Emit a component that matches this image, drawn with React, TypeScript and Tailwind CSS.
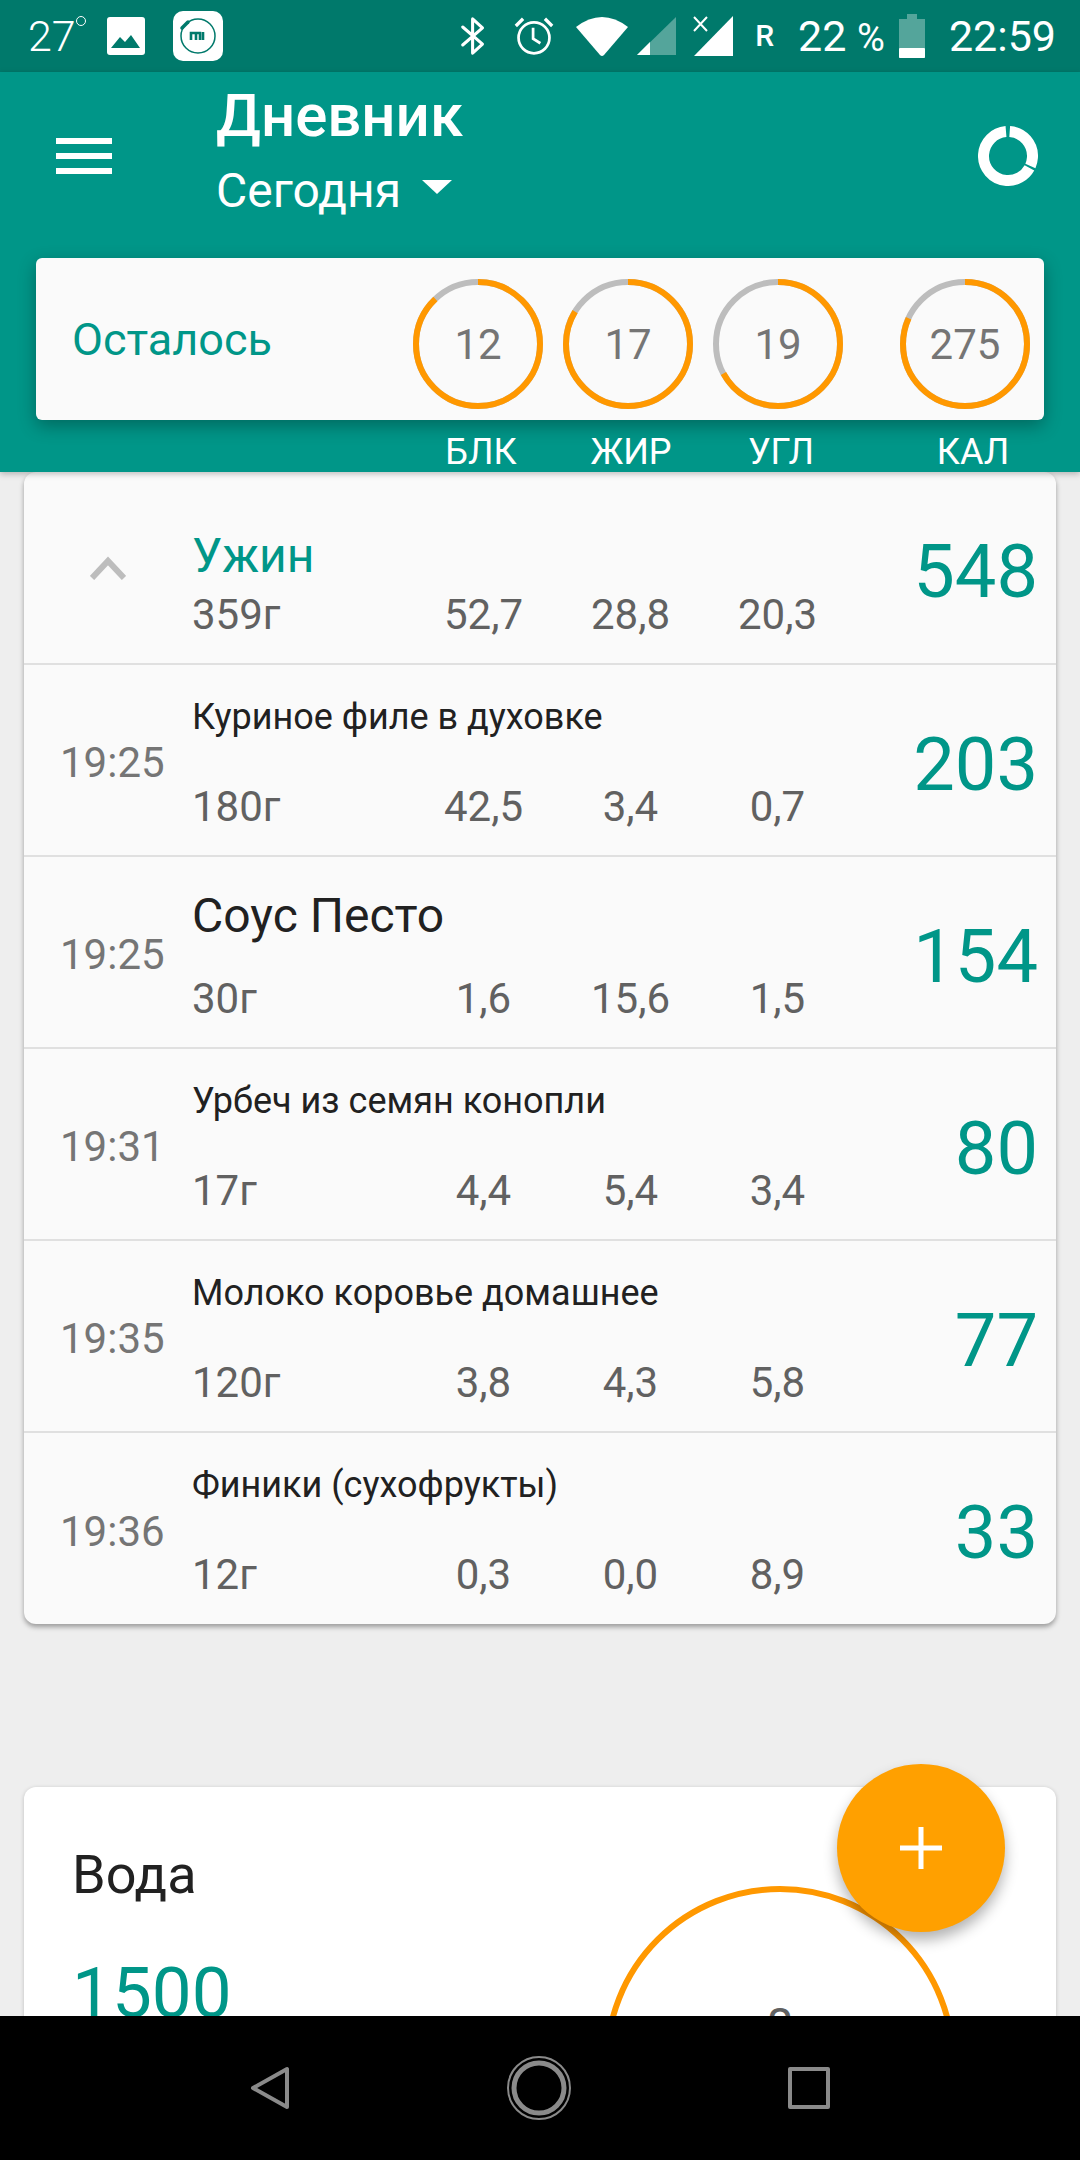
import React from 'react';

const TEAL = '#009688';
const ORANGE = '#FF9800';

type Entry = {
  time: string;
  name: string;
  large?: boolean;
  grams: string;
  protein: string;
  fat: string;
  carbs: string;
  kcal: string;
};

const entries: Entry[] = [
  { time: '19:25', name: 'Куриное филе в духовке', grams: '180г', protein: '42,5', fat: '3,4', carbs: '0,7', kcal: '203' },
  { time: '19:25', name: 'Соус Песто', large: true, grams: '30г', protein: '1,6', fat: '15,6', carbs: '1,5', kcal: '154' },
  { time: '19:31', name: 'Урбеч из семян конопли', grams: '17г', protein: '4,4', fat: '5,4', carbs: '3,4', kcal: '80' },
  { time: '19:35', name: 'Молоко коровье домашнее', grams: '120г', protein: '3,8', fat: '4,3', carbs: '5,8', kcal: '77' },
  { time: '19:36', name: 'Финики (сухофрукты)', grams: '12г', protein: '0,3', fat: '0,0', carbs: '8,9', kcal: '33' },
];

const macros = [
  { label: '12', done: 0.878 },
  { label: '17', done: 0.836 },
  { label: '19', done: 0.67 },
  { label: '275', done: 0.817 },
];

// Ring with an orange arc running clockwise from 12 o'clock over a grey track
function Ring({ value, done }: { value: string; done: number }) {
  const r = 62;
  const c = 2 * Math.PI * r;
  return (
    <div className="relative w-[130px] h-[130px] flex items-center justify-center">
      <svg className="absolute inset-0" width="130" height="130" viewBox="0 0 130 130">
        <circle cx="65" cy="65" r={r} fill="none" stroke="#BDBDBD" strokeWidth="6" />
        <circle
          cx="65"
          cy="65"
          r={r}
          fill="none"
          stroke={ORANGE}
          strokeWidth="6"
          strokeDasharray={`${c * done} ${c}`}
          transform="rotate(-90 65 65)"
        />
      </svg>
      <span className="text-[42px] leading-none text-[#757575] mt-[2px]">{value}</span>
    </div>
  );
}

function StatusBar() {
  return (
    <div className="h-[72px] shrink-0 bg-[#00796B] flex items-center text-white pl-[28px] pr-[24px]">
      <span className="text-[43px] leading-none font-light">27</span>
      <span className="w-[10px] h-[10px] rounded-full border border-white -mt-[30px]" />
      <svg className="ml-[20px]" width="40" height="40" viewBox="0 0 40 40">
        <rect x="1" y="1" width="38" height="38" rx="3" fill="#fff" />
        <path d="M5 32 L14 21 L19 26 L25 19 L34 32 Z" fill="#00796B" />
      </svg>
      <svg className="ml-[27px]" width="50" height="50" viewBox="0 0 50 50">
        <rect x="0" y="0" width="50" height="50" rx="10" fill="#fff" />
        <circle cx="25" cy="25" r="17" fill="none" stroke="#00796B" strokeWidth="1.5" />
        <path d="M9 17 L15 11" stroke="#00796B" strokeWidth="3.5" strokeLinecap="round" />
        <path d="M18 29 V22 H23 V29 M23 22 H27 V29 M30 21 V29" fill="none" stroke="#00796B" strokeWidth="2.6" />
      </svg>
      <div className="ml-auto flex items-center">
        <svg width="27" height="42" viewBox="0 0 30 44" fill="none" stroke="#fff" strokeWidth="3.4" strokeLinecap="round" strokeLinejoin="round">
          <path d="M3 12 L25 31 L14 41 V3 L25 13 L3 32" />
        </svg>
        <svg className="ml-[27px]" width="40" height="44" viewBox="0 0 44 46" fill="none" stroke="#fff" strokeWidth="3">
          <circle cx="22" cy="25" r="17" />
          <path d="M21 14 V26 L29 31" />
          <path d="M2 12 L10 4 M42 12 L34 4" strokeWidth="3.6" />
        </svg>
        <svg className="ml-[22px]" width="52" height="42" viewBox="0 0 52 42">
          <path d="M0 12 Q26 -8 52 12 L28 40 Q26 42 24 40 Z" fill="#fff" />
        </svg>
        <svg className="ml-[8px]" width="40" height="42" viewBox="0 0 40 42">
          <path d="M40 2 V40 H1 Z" fill="#fff" fillOpacity="0.33" />
          <path d="M14 27 V40 H1 Z" fill="#fff" />
        </svg>
        <svg className="ml-[17px]" width="40" height="44" viewBox="0 0 40 44">
          <path d="M40 2 V42 H1 Z" fill="#fff" />
          <path d="M1 3 L14 17 M14 3 L1 17" stroke="#fff" strokeWidth="2" />
        </svg>
        <span className="ml-[22px] text-[30px] font-medium leading-none">R</span>
        <span className="ml-[24px] text-[43px] leading-none">22 <span className="text-[38px]">%</span></span>
        <svg className="ml-[14px]" width="26" height="44" viewBox="0 0 26 44">
          <path d="M8 0 H18 V5 H26 V44 H0 V5 H8 Z" fill="#fff" fillOpacity="0.33" />
          <rect x="0" y="34" width="26" height="10" rx="1" fill="#fff" />
        </svg>
        <span className="ml-[24px] text-[43px] leading-none">22:59</span>
      </div>
    </div>
  );
}

function Header() {
  return (
    <div className="h-[400px] shrink-0 flex flex-col relative z-10 shadow-[0_2px_6px_rgba(0,0,0,0.25)]" style={{ backgroundColor: TEAL }}>
      <div className="h-[186px] shrink-0 flex items-start text-white">
        <div className="w-[56px] ml-[56px] mt-[66px] flex flex-col gap-[9px]">
          <div className="h-[6px] bg-white" />
          <div className="h-[6px] bg-white" />
          <div className="h-[6px] bg-white" />
        </div>
        <div className="ml-[104px] mt-[11px] flex flex-col">
          <span className="text-[60px] leading-[66px] font-medium">Дневник</span>
          <div className="mt-[16px] flex items-center">
            <span className="text-[48px] leading-[52px]">Сегодня</span>
            <span className="ml-[21px] -mt-[8px] w-0 h-0 border-l-[15px] border-r-[15px] border-t-[14px] border-l-transparent border-r-transparent border-t-white" />
          </div>
        </div>
        <svg className="ml-auto mr-[42px] mt-[54px]" width="60" height="60" viewBox="0 0 60 60" fill="none" stroke="#fff" strokeWidth="11">
          <circle cx="30" cy="30" r="24.5" pathLength="360" strokeDasharray="110 5 236 9" transform="rotate(-86 30 30)" />
        </svg>
      </div>
      <div className="mx-[36px] h-[162px] shrink-0 rounded-[6px] bg-[#FAFAFA] shadow-[0_6px_18px_rgba(0,0,0,0.3)] flex items-center pl-[36px]">
        <span className="text-[45px] text-[#009688] w-[341px] mt-[2px]">Осталось</span>
        <div className="flex pt-[10px]">
          <div className="w-[150px]"><Ring value={macros[0].label} done={macros[0].done} /></div>
          <div className="w-[150px]"><Ring value={macros[1].label} done={macros[1].done} /></div>
          <div className="w-[187px]"><Ring value={macros[2].label} done={macros[2].done} /></div>
          <div className="w-[130px]"><Ring value={macros[3].label} done={macros[3].done} /></div>
        </div>
      </div>
      <div className="flex pl-[406px] pt-[12px] text-white text-[36px] leading-[40px]">
        <span className="w-[150px] text-center">БЛК</span>
        <span className="w-[150px] text-center">ЖИР</span>
        <span className="w-[150px] text-center">УГЛ</span>
        <span className="w-[190px] ml-[22px] text-center">КАЛ</span>
      </div>
    </div>
  );
}

function MacroCells({ entry }: { entry: { protein: string; fat: string; carbs: string } }) {
  return (
    <div className="flex text-[42px] leading-[44px] text-[#616161] ml-[-1px]">
      <span className="w-[147px] text-center">{entry.protein}</span>
      <span className="w-[147px] text-center">{entry.fat}</span>
      <span className="w-[147px] text-center">{entry.carbs}</span>
    </div>
  );
}

function DinnerHead() {
  return (
    <div className="h-[193px] flex relative border-b-2 border-[#E0E0E0]">
      <div className="w-[168px] shrink-0 flex justify-center pt-[84px]">
        <svg width="36" height="24" viewBox="0 0 36 24" fill="none" stroke="#BDBDBD" strokeWidth="6">
          <path d="M2 22 L18 5 L34 22" />
        </svg>
      </div>
      <div className="flex-1 flex flex-col">
        <span className="mt-[57px] text-[48px] leading-[54px] text-[#009688]">Ужин</span>
        <div className="flex items-center mt-[10px]">
          <span className="w-[219px] text-[42px] leading-[44px] text-[#616161]">359г</span>
          <MacroCells entry={{ protein: '52,7', fat: '28,8', carbs: '20,3' }} />
        </div>
      </div>
      <span className="absolute right-[18px] top-[58px] text-[74px] leading-[84px] text-[#009688]">548</span>
    </div>
  );
}

function EntryRow({ entry, last }: { entry: Entry; last: boolean }) {
  return (
    <div className={`flex relative ${last ? 'h-[191px]' : 'h-[192px] border-b-2 border-[#E0E0E0]'}`}>
      <div className="w-[168px] shrink-0 flex items-center pl-[36px] pt-[6px]">
        <span className="text-[42px] leading-none text-[#757575]">{entry.time}</span>
      </div>
      <div className="flex-1 flex flex-col">
        <div className={entry.large ? 'h-[120px] pt-[32px] text-[48px] leading-[54px] text-[#212121]' : 'h-[120px] pt-[30px] text-[36px] leading-[44px] text-[#212121]'}>
          {entry.name}
        </div>
        <div className="flex items-center">
          <span className="w-[219px] text-[42px] leading-[44px] text-[#616161]">{entry.grams}</span>
          <MacroCells entry={entry} />
        </div>
      </div>
      <span className="absolute right-[18px] top-[58px] text-[74px] leading-[84px] text-[#009688]">{entry.kcal}</span>
    </div>
  );
}

function WaterCard() {
  return (
    <div className="mt-[163px] mx-[24px] h-[400px] rounded-t-[12px] bg-white shadow-[0_1px_4px_rgba(0,0,0,0.2)] relative overflow-hidden">
      <div className="pl-[48px] pt-[58px] text-[54px] leading-[60px] text-[#212121]">Вода</div>
      <div className="pl-[48px] pt-[46px] text-[71px] leading-[84px] text-[#009688]">1500</div>
      <div className="absolute left-[580px] top-[99px] w-[352px] h-[352px] rounded-full border-[6px] border-[#FF9800]" />
      <div className="absolute left-[580px] top-[215px] w-[352px] text-center text-[48px] leading-none text-[#616161]">8</div>
    </div>
  );
}

function NavBar() {
  return (
    <div className="h-[144px] shrink-0 bg-black flex items-center justify-center relative z-20">
      <div className="flex items-center gap-[216px]">
        <svg width="40" height="44" viewBox="0 0 40 44" fill="none" stroke="#8a8a8a" strokeWidth="4" strokeLinejoin="round">
          <path d="M37 3 V41 L3 22 Z" />
        </svg>
        <svg width="66" height="66" viewBox="0 0 66 66" fill="none" stroke="#8a8a8a">
          <circle cx="33" cy="33" r="31" strokeWidth="2" />
          <circle cx="33" cy="33" r="25" strokeWidth="5" />
        </svg>
        <svg width="42" height="42" viewBox="0 0 42 42" fill="none" stroke="#8a8a8a" strokeWidth="4" strokeLinejoin="round">
          <rect x="2" y="2" width="38" height="38" />
        </svg>
      </div>
    </div>
  );
}

export default function App() {
  return (
    <div className="w-[1080px] h-[2160px] relative overflow-hidden flex flex-col bg-[#EEEEEE] font-['Roboto',sans-serif]">
      <StatusBar />
      <Header />
      <div className="flex-1 overflow-hidden">
        <div className="mx-[24px] rounded-[12px] bg-[#FAFAFA] shadow-[0_3px_5px_rgba(0,0,0,0.35)]">
          <DinnerHead />
          {entries.map((entry, i) => (
            <EntryRow key={entry.name} entry={entry} last={i === entries.length - 1} />
          ))}
        </div>
        <WaterCard />
      </div>
      <NavBar />
      {/* add button floats over the water card */}
      <div className="absolute left-[837px] top-[1764px] w-[168px] h-[168px] rounded-full bg-[#FFA000] shadow-[0_8px_14px_rgba(0,0,0,0.3)] flex items-center justify-center z-10">
        <svg width="42" height="42" viewBox="0 0 42 42">
          <path d="M21 0 V42 M0 21 H42" stroke="#fff" strokeWidth="5" />
        </svg>
      </div>
    </div>
  );
}
